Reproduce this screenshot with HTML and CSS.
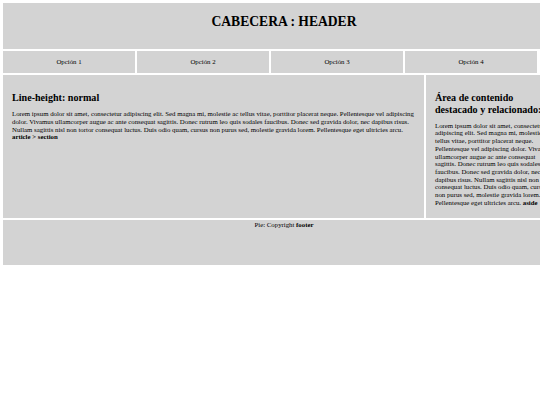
FILE: index.html
```html
<!DOCTYPE html>
<html lang="es">
<head>
<meta charset="utf-8">
<title>Line-height</title>
<link rel="stylesheet" href="styles.css">
</head>
<body>
<div class="page">
  <header class="header">
    <h1 class="title">CABECERA : HEADER</h1>
  </header>
  <nav class="nav">
    <a class="nav-item">Opción 1</a>
    <a class="nav-item">Opción 2</a>
    <a class="nav-item">Opción 3</a>
    <a class="nav-item">Opción 4</a>
  </nav>
  <div class="main">
    <section class="article">
      <h2 class="heading">Line-height: normal</h2>
      <p class="text">Lorem ipsum dolor sit amet, consectetur adipiscing elit. Sed magna mi, molestie ac tellus vitae, porttitor placerat neque. Pellentesque vel adipiscing dolor. Vivamus ullamcorper augue ac ante consequat sagittis. Donec rutrum leo quis sodales faucibus. Donec sed gravida dolor, nec dapibus risus. Nullam sagittis nisl non tortor consequat luctus. Duis odio quam, cursus non purus sed, molestie gravida lorem. Pellentesque eget ultricies arcu. <strong>article &gt; section</strong></p>
    </section>
    <aside class="aside">
      <h2 class="heading">Área de contenido destacado y relacionado:</h2>
      <p class="text">Lorem ipsum dolor sit amet, consectetur adipiscing elit. Sed magna mi, molestie ac tellus vitae, porttitor placerat neque. Pellentesque vel adipiscing dolor. Vivamus ullamcorper augue ac ante consequat sagittis. Donec rutrum leo quis sodales faucibus. Donec sed gravida dolor, nec dapibus risus. Nullam sagittis nisl non tortor consequat luctus. Duis odio quam, cursus non purus sed, molestie gravida lorem. Pellentesque eget ultricies arcu. <strong>aside</strong></p>
    </aside>
  </div>
  <footer class="footer">Pie: Copyright <strong>footer</strong></footer>
</div>
</body>
</html>
```

FILE: styles.css
```css
html, body {
  margin: 0;
  padding: 0;
  overflow: hidden;
  background: #ffffff;
}

body {
  font-family: "Liberation Serif", "Times New Roman", serif;
  font-size: 6.8px;
  line-height: 7.7px;
  color: #000000;
}

.page {
  width: 562px;
  margin: 3px 0 0 3px;
  display: flex;
  flex-direction: column;
  gap: 2px;
}

.header {
  background: #d3d3d3;
  height: 46px;
  box-sizing: border-box;
  padding-top: 10.5px;
  text-align: center;
}

.title {
  margin: 0;
  font-size: 13.6px;
  line-height: 15.6px;
  font-weight: bold;
}

.nav {
  display: flex;
  gap: 2px;
}

.nav-item {
  width: 132px;
  height: 22px;
  background: #d3d3d3;
  display: flex;
  align-items: center;
  justify-content: center;
  color: #000000;
  text-decoration: none;
}

.main {
  display: flex;
  gap: 2px;
}

.article {
  width: 421px;
  flex: none;
  box-sizing: border-box;
  background: #d3d3d3;
  padding: 9px 9px 5px;
}

.aside {
  width: 139px;
  flex: none;
  box-sizing: border-box;
  background: #d3d3d3;
  padding: 9px 9px 5px;
}

.heading {
  font-size: 10.1px;
  line-height: 11.6px;
  font-weight: bold;
  margin: 8px 0 6.5px;
}

.text {
  margin: 6.5px 0;
}

.footer {
  background: #d3d3d3;
  height: 45px;
  box-sizing: border-box;
  padding-top: 1.5px;
  text-align: center;
}
```
